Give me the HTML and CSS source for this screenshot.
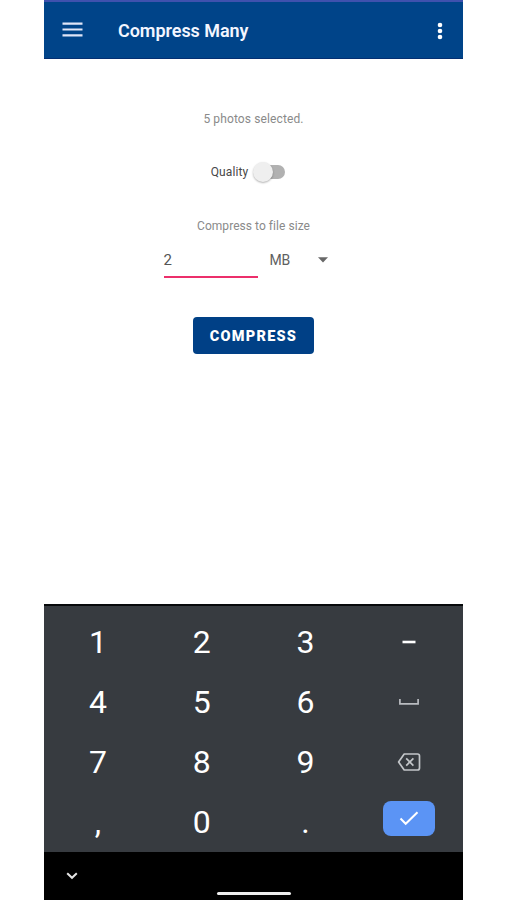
FILE: index.html
```
<!DOCTYPE html>
<html lang="en">
<head>
	<meta charset="UTF-8">
	<title>Compress Many</title>
	<link rel="stylesheet" href="styles.css">
</head>
<body>
	<div class="phone">
		<header class="toolbar">
			<svg class="menu" width="21" height="15" viewBox="0 0 21 15"><path d="M.5 1.6h20M.5 7.5h20M.5 13.4h20" stroke="#dfe5f7" stroke-width="2.2"/></svg>
			<h1 class="title">Compress Many</h1>
			<svg class="more" width="6" height="18" viewBox="0 0 6 18" fill="#fff"><circle cx="3" cy="3" r="2.3"/><circle cx="3" cy="9" r="2.3"/><circle cx="3" cy="15" r="2.3"/></svg>
		</header>

		<main class="content">
			<p class="hint">5 photos selected.</p>
			<div class="quality">
				<span class="label">Quality</span>
				<span class="switch"><span class="thumb"></span></span>
			</div>
			<p class="hint size-hint">Compress to file size</p>
			<div class="size-row">
				<div class="size-input">2</div>
				<div class="unit">
					<span>MB</span>
					<svg width="10" height="6" viewBox="0 0 10 6"><path d="M0 .3h10L5 5.6z" fill="#686868"/></svg>
				</div>
			</div>
			<button class="compress">COMPRESS</button>
		</main>

		<div class="keyboard">
			<div class="key">1</div>
			<div class="key">2</div>
			<div class="key">3</div>
			<div class="key"><svg width="14" height="4" viewBox="0 0 14 4"><path d="M.5 2h13" stroke="#fff" stroke-width="2.6"/></svg></div>
			<div class="key">4</div>
			<div class="key">5</div>
			<div class="key">6</div>
			<div class="key"><svg width="20" height="6" viewBox="0 0 20 6"><path d="M.9 0v4.8h18.2V0" fill="none" stroke="#b9bcc0" stroke-width="1.7"/></svg></div>
			<div class="key">7</div>
			<div class="key">8</div>
			<div class="key">9</div>
			<div class="key">
				<svg width="24" height="18" viewBox="0 0 24 18" fill="none" stroke="#c3c6c9" stroke-width="1.7">
					<path d="M7.2 1H20.5a2 2 0 0 1 2 2V15a2 2 0 0 1-2 2H7.2L1.6 9z" stroke-linejoin="round"/>
					<path d="M9.2 5.4l7.2 7.2M16.4 5.4l-7.2 7.2"/>
				</svg>
			</div>
			<div class="key">,</div>
			<div class="key">0</div>
			<div class="key">.</div>
			<div class="key">
				<div class="done"><svg width="20" height="15" viewBox="0 0 20 15"><path d="M1.5 7.5l5.2 5.3L18.5 1.2" fill="none" stroke="#fff" stroke-width="2"/></svg></div>
			</div>
		</div>

		<nav class="navbar">
			<svg class="hide" width="12" height="8" viewBox="0 0 12 8"><path d="M1.2 1.2L6 5.8l4.8-4.6" fill="none" stroke="#e4e4e4" stroke-width="2"/></svg>
			<div class="home"></div>
			<div></div>
		</nav>
	</div>
</body>
</html>
```
FILE: styles.css
```
* {box-sizing: border-box;}
body {margin: 0; background: #fff; font-family: Roboto, "Liberation Sans", sans-serif;}
svg {display: block;}

.phone {width: 419px; height: 900px; margin-left: 44px; display: flex; flex-direction: column;}

/* top bar */
.toolbar {height: 59px; padding: 0 20px 0 18px; display: flex; align-items: center;
	background: #004489; border-top: 2px solid #3f51ae; border-bottom: 1px solid #042f72;}
.menu {margin-bottom: 1px;}
.title {margin: 2px auto 0 35px; font-size: 18px; font-weight: 600; line-height: 24px; letter-spacing: -.05px; color: #f3f6ff;}
.more {margin-top: 1px;}

/* form */
.content {flex: 1; display: flex; flex-direction: column; align-items: center; padding-top: 52px;}
.hint {margin: 0; font-size: 12px; line-height: 16px; letter-spacing: .12px; color: #8a8a8a;}
.quality {display: flex; align-items: center; height: 22px; margin-top: 34px; padding-right: 11px;}
.label {font-size: 12px; letter-spacing: .1px; color: #484848;}
.switch {width: 28px; height: 14px; margin-left: 9px; border-radius: 7px; background: #b1b1b1;
	display: flex; align-items: center;}
.thumb {width: 20px; height: 20px; flex: none; margin-left: -4px; border-radius: 50%;
	background: #efefef; box-shadow: 0 1px 2px rgba(0,0,0,.3);}
.size-hint {margin-top: 35px; letter-spacing: .05px;}
.size-row {display: flex; width: 180px; margin-top: 9px;}
.size-input {width: 94px; height: 35px; border-bottom: 2px solid #ec2f6b;
	font-size: 15px; line-height: 34px; color: #555;}
.unit {flex: 1; height: 35px; padding: 0 16px 1px 12px; display: flex; align-items: center;
	justify-content: space-between; font-size: 14px; letter-spacing: -.3px; color: #606060;}
.compress {width: 121px; height: 37px; margin-top: 39px; padding: 1px 0 0; border: 0; border-radius: 4px;
	background: #004086; color: #fff; font-family: inherit; font-size: 14.5px; font-weight: 900; letter-spacing: 1.25px;}

/* numeric keyboard */
.keyboard {height: 248px; padding: 6px 2px 0; border-top: 2px solid #07090b; background: #373b40;
	display: grid; grid-template-columns: repeat(4, 1fr); grid-template-rows: repeat(4, 60px);}
.key {display: flex; align-items: center; justify-content: center; font-size: 32px; color: #fff;}
.done {width: 52px; height: 35px; margin-bottom: 8px; border-radius: 8px; background: #5b94f5;
	display: flex; align-items: center; justify-content: center;}

.navbar {height: 48px; padding: 0 22px; background: #000;
	display: grid; grid-template-columns: 1fr 74px 1fr; align-items: center;}
.home {height: 3px; align-self: end; margin-bottom: 5px; border-radius: 2px; background: #eee;}
```
